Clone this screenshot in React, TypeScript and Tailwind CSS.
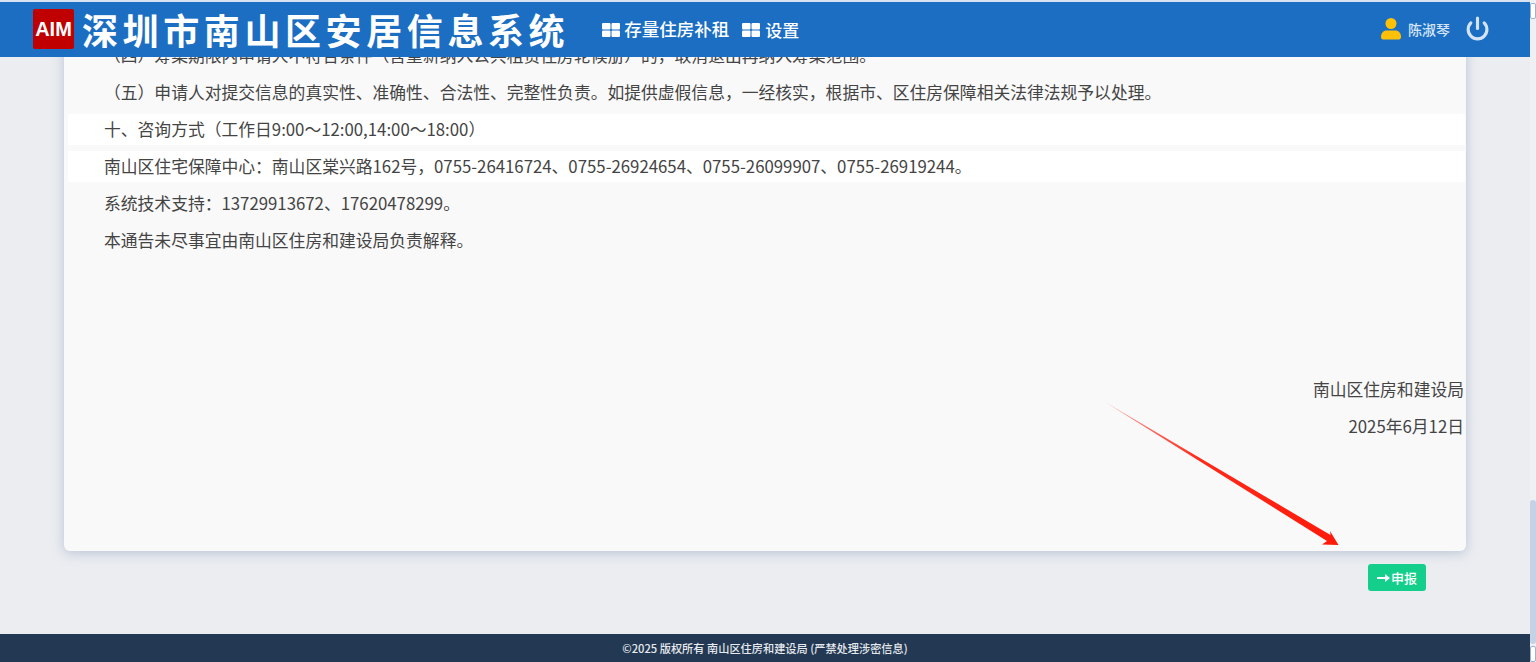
import { Power } from 'lucide-react'

const lines = [
  { text: '（四）筹集期限内申请人不符合条件（含重新纳入公共租赁住房轮候册）的，取消退出再纳入筹集范围。' },
  { text: '（五）申请人对提交信息的真实性、准确性、合法性、完整性负责。如提供虚假信息，一经核实，根据市、区住房保障相关法律法规予以处理。' },
  { text: '十、咨询方式（工作日9:00～12:00,14:00～18:00）', white: true },
  { text: '南山区住宅保障中心：南山区棠兴路162号，0755-26416724、0755-26924654、0755-26099907、0755-26919244。', white: true },
  { text: '系统技术支持：13729913672、17620478299。' },
  { text: '本通告未尽事宜由南山区住房和建设局负责解释。' },
]

function GridIcon() {
  return (
    <svg viewBox="0 0 18 14" className="w-[18px] h-[14px]" fill="#fff">
      <rect x="0" y="0" width="8.5" height="6.5" rx="1" />
      <rect x="9.5" y="0" width="8.5" height="6.5" rx="1" />
      <rect x="0" y="7.5" width="8.5" height="6.5" rx="1" />
      <rect x="9.5" y="7.5" width="8.5" height="6.5" rx="1" />
    </svg>
  )
}

export default function App() {
  return (
    <div className="relative h-[662px] w-[1536px] overflow-hidden flex bg-[#ebedf1] font-['Noto_Sans_CJK_SC','Noto_Sans',sans-serif]">
      <div className="flex-1 flex flex-col min-w-0">
        {/* 顶部栏 */}
        <header className="relative z-10 h-[57px] shrink-0 border-t-2 border-[#d7e3f1] bg-[#1b6ec2] flex items-center pl-[33px] pr-[40px]">
          <div className="mb-[1px] w-[41px] h-[40px] rounded-[2px] bg-[#c00000] flex items-center justify-center text-white font-bold text-[20px] font-['Liberation_Sans',sans-serif]">
            AIM
          </div>
          <div className="ml-[8px] mb-[1px] text-white font-bold text-[36px] tracking-[4.6px] leading-none whitespace-nowrap">深圳市南山区安居信息系统</div>
          <div className="ml-[33px] flex items-center gap-[4px] text-white font-medium text-[17.5px]">
            <GridIcon />
            <span>存量住房补租</span>
          </div>
          <div className="ml-[13px] flex items-center gap-[5px] text-white font-medium text-[17px]">
            <GridIcon />
            <span>设置</span>
          </div>
          <div className="ml-auto flex items-center">
            <svg viewBox="0 0 20 22" className="w-[20px] h-[22px] mb-[2px]" fill="#ffc107">
              <circle cx="10" cy="5.500" r="5.500" />
              <path d="M0 19c0-4 2.500-6.500 5.500-6.500h9c3 0 5.500 2.500 5.500 6.500 0 1.500-1 2.500-2 2.500H2c-1 0-2-1-2-2.500z" />
            </svg>
            <span className="ml-[7px] text-[14px] font-medium text-[#d5e4f5]">陈淑琴</span>
            <Power className="ml-[15px] mb-[3px] text-[#d5e4f5]" size={25} strokeWidth={3} />
          </div>
        </header>

        {/* 本文 */}
        <main className="flex-1 min-h-0 overflow-hidden flex flex-col justify-end">
          <div className="shrink-0 ml-[64px] w-[1402px] rounded-b-[6px] bg-[#f9f9fa] shadow-[0_2px_12px_rgba(140,155,185,0.5)] pl-[4px] pr-[1px] pb-[109px] text-[16.8px] text-[#444] leading-[31px]">
            {lines.map((l) => (
              <p key={l.text} className={`mb-[6px] pl-[36px] whitespace-nowrap ${l.white ? 'bg-white' : ''}`}>
                {l.text}
              </p>
            ))}
            <div className="h-[112px]" />
            <p className="mb-[6px] pr-[1px] text-right">南山区住房和建设局</p>
            <p className="pr-[1px] text-right">2025年6月12日</p>
          </div>
          <div className="shrink-0 h-[83px] pt-[13px] pr-[104px] flex justify-end items-start">
            <button className="h-[27px] w-[58px] rounded-[3px] bg-[#14cf8c] text-white text-[13px] font-medium flex items-center justify-center gap-[1px]">
              <svg viewBox="0 0 13 8" className="w-[13px] h-[8px]" fill="#fff">
                <path d="M0 3h8V0l5 4-5 4V5H0z" />
              </svg>
              申报
            </button>
          </div>
        </main>

        <footer className="h-[28px] shrink-0 bg-[#233953] text-[#e6e9ee] text-[11.2px] font-medium flex items-center justify-center">
          ©2025 版权所有 南山区住房和建设局 (严禁处理涉密信息)
        </footer>
      </div>

      {/* 滚动条 */}
      <div className="w-[6px] shrink-0 bg-[#eef0f4] flex flex-col">
        <div className="mt-[3px] h-[16px] rounded-[2px] border border-[#9fb2cc] bg-white" />
        <div className="mt-[481px] h-[144px] rounded-[3px] bg-[#c5d2e6]" />
        <div className="mt-[2px] h-[16px] rounded-[2px] border border-[#9fb2cc] bg-white" />
      </div>

      {/* 红色箭头标注 */}
      <svg className="absolute left-[1100px] top-[398px] w-[245px] h-[155px] pointer-events-none" viewBox="1100 398 245 155">
        <defs>
          <linearGradient id="arrow" x1="1105" y1="402" x2="1338" y2="545" gradientUnits="userSpaceOnUse">
            <stop offset="0" stopColor="#ff3b30" stopOpacity="0.5" />
            <stop offset="0.4" stopColor="#ff2a1a" />
            <stop offset="1" stopColor="#ff1a0a" />
          </linearGradient>
        </defs>
        <polygon points="1105,402 1330.500,535 1330,531 1338.500,545 1322,544.500 1327,541" fill="url(#arrow)" />
      </svg>
    </div>
  )
}
